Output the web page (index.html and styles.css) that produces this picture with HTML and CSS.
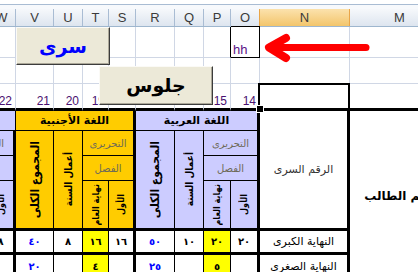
FILE: index.html
```html
<!DOCTYPE html>
<html lang="ar">
<head>
<meta charset="utf-8">
<link rel="stylesheet" href="styles.css">
</head>
<body>
<div class="screen">
  <div class="topstrip"></div>
  <div class="colheads">
    <div class="ch"></div>
    <div class="ch">W</div>
    <div class="ch">V</div>
    <div class="ch">U</div>
    <div class="ch">T</div>
    <div class="ch">S</div>
    <div class="ch">R</div>
    <div class="ch">Q</div>
    <div class="ch">P</div>
    <div class="ch">O</div>
    <div class="ch ch-sel">N</div>
    <div class="ch">M</div>
  </div>
  <div class="sheet">
    <!-- row 1 -->
    <div class="g"></div><div class="g"></div><div class="g"></div><div class="g"></div>
    <div class="g"></div><div class="g"></div><div class="g"></div><div class="g"></div>
    <div class="g g-pk"></div>
    <div class="g hh">hh</div>
    <div class="g"></div><div class="g"></div>
    <!-- row 2 -->
    <div class="g"></div><div class="g"></div><div class="g"></div><div class="g"></div>
    <div class="g"></div><div class="g"></div><div class="g"></div><div class="g"></div>
    <div class="g"></div><div class="g"></div><div class="g"></div><div class="g"></div>
    <!-- row 3 -->
    <div class="g g3 num"></div>
    <div class="g g3 num">22</div>
    <div class="g g3 num">21</div>
    <div class="g g3 num">20</div>
    <div class="g g3 num">19</div>
    <div class="g g3 num">18</div>
    <div class="g g3 num">17</div>
    <div class="g g3 num">16</div>
    <div class="g g3 num">15</div>
    <div class="g g3 num">14</div>
    <div class="g g3 sel"></div>
    <div class="g g3"></div>
    <!-- row 4 -->
    <div class="c lav span2 title"></div>
    <div class="c yel span4 title tr"><span dir="rtl">اللغة الأجنبية</span></div>
    <div class="c lav span4 title tr"><span dir="rtl">اللغة العربية</span></div>
    <div class="c rs4 plain tr bb3"><span dir="rtl">الرقم السرى</span></div>
    <div class="c rs6 name"><span dir="rtl">اسم الطالب</span></div>
    <!-- row 5 -->
    <div class="c lav span2 sub tr"><span dir="rtl">التحريرى</span></div>
    <div class="c yel rs3 bb3"><span class="vt big" dir="rtl">المجموع الكلى</span></div>
    <div class="c yel rs3 bb3"><span class="vt mid" dir="rtl">أعمال السنة</span></div>
    <div class="c yel span2 sub tr"><span dir="rtl">التحريرى</span></div>
    <div class="c lav rs3 bb3"><span class="vt big" dir="rtl">المجموع الكلى</span></div>
    <div class="c lav rs3 bb3"><span class="vt mid" dir="rtl">أعمال السنة</span></div>
    <div class="c lav span2 sub tr"><span dir="rtl">التحريرى</span></div>
    <!-- row 6 -->
    <div class="c lav span2 sub tr"><span dir="rtl">الفصل</span></div>
    <div class="c yel span2 sub tr"><span dir="rtl">الفصل</span></div>
    <div class="c lav span2 sub tr"><span dir="rtl">الفصل</span></div>
    <!-- row 7 -->
    <div class="c lav bb3"><span class="vt sm" dir="rtl">نهاية العام</span></div>
    <div class="c lav bb3 tr"><span class="vt sm" dir="rtl">الأول</span></div>
    <div class="c yel bb3"><span class="vt sm" dir="rtl">نهاية العام</span></div>
    <div class="c yel bb3 tr"><span class="vt sm" dir="rtl">الأول</span></div>
    <div class="c lav bb3"><span class="vt sm" dir="rtl">نهاية العام</span></div>
    <div class="c lav bb3 tr"><span class="vt sm" dir="rtl">الأول</span></div>
    <!-- row 8 (data) -->
    <div class="c d bb3"></div>
    <div class="c d bb3 tr">٨</div>
    <div class="c d bb3 blue">٤٠</div>
    <div class="c d bb3">٨</div>
    <div class="c d bb3 ylw">١٦</div>
    <div class="c d bb3 tr">١٦</div>
    <div class="c d bb3 blue">٥٠</div>
    <div class="c d bb3">١٠</div>
    <div class="c d bb3 ylw">٢٠</div>
    <div class="c d bb3 tr">٢٠</div>
    <div class="c d bb3 tr label"><span dir="rtl">النهاية الكبرى</span></div>
    <!-- row 9 (data) -->
    <div class="c d bb3"></div>
    <div class="c d bb3 tr"></div>
    <div class="c d bb3 blue">٢٠</div>
    <div class="c d bb3"></div>
    <div class="c d bb3 ylw">٤</div>
    <div class="c d bb3 tr"></div>
    <div class="c d bb3 blue">٢٥</div>
    <div class="c d bb3"></div>
    <div class="c d bb3 ylw">٥</div>
    <div class="c d bb3 tr"></div>
    <div class="c d bb3 tr label"><span dir="rtl">النهاية الصغرى</span></div>
  </div>

  <button class="btn btn-sirri" type="button">سرى</button>
  <button class="btn btn-julus" type="button">جلوس</button>

  <svg class="arrow" width="120" height="40" viewBox="0 0 120 40" aria-hidden="true">
    <path d="M28 10 L11 19.5 L28 30" fill="none" stroke="#ff0000" stroke-width="8" stroke-linecap="round" stroke-linejoin="round"/>
    <path d="M13 19.5 L108 19.5" fill="none" stroke="#ff0000" stroke-width="7" stroke-linecap="round"/>
  </svg>
</div>
</body>
</html>
```

FILE: styles.css
```css
* { box-sizing: border-box; }

html, body {
  margin: 0;
  padding: 0;
  background: #ffffff;
}

.screen {
  position: relative;
  width: 418px;
  height: 272px;
  overflow: hidden;
  background: #ffffff;
}

.topstrip {
  height: 9px;
  background: linear-gradient(#ffffff 0 4px, #a9bcd3 4px 5px, #f7f9fc 5px);
}

.colheads,
.sheet {
  display: grid;
  grid-template-columns: 30px 28px 38px 29px 26px 27px 39px 29px 27px 29px 90px 100px;
  margin-left: -42px;
  width: 492px;
}

.colheads {
  height: 18px;
  border-bottom: 1px solid #9eb6ce;
  background: linear-gradient(#f6f8fb, #dde5ef);
}

.ch {
  border-right: 1px solid #a9bcd3;
  font: 13px/17px "Liberation Sans", Arial, sans-serif;
  color: #3b3b3b;
  text-align: center;
}

.ch-sel {
  background: linear-gradient(#fbe2ad, #f3c56b);
  border-right-color: #e9a548;
  border-left: 1px solid #e9a548;
  margin-left: -1px;
}

.sheet {
  grid-template-rows: 31px 26px 27px 20px 25px 25px 50px 24px 25px;
}

/* spreadsheet grid cells (top area) */
.g {
  border-right: 1px solid #d0d7e5;
  border-bottom: 1px solid #d0d7e5;
}

.g-pk { border-right-color: #000; }

.hh {
  border-right-color: #000;
  border-bottom-color: #000;
  box-shadow: 0 -1px 0 0 #000;
  display: flex;
  align-items: flex-end;
  padding: 0 0 1px 2px;
  font: 13px/13px "Liberation Sans", Arial, sans-serif;
  color: #5b1186;
}

.g3 { border-bottom: 3px solid #000; }

.num {
  display: flex;
  justify-content: flex-end;
  align-items: flex-end;
  padding: 0 3px 1px 0;
  font: 12px/12px "Liberation Sans", Arial, sans-serif;
  color: #4a1070;
}

.sel { position: relative; }
.sel::after {
  content: "";
  position: absolute;
  left: -2px;
  top: -1px;
  right: -1px;
  bottom: -3px;
  border: 2px solid #000;
}
.sel::before {
  content: "";
  position: absolute;
  left: -4px;
  bottom: -5px;
  width: 6px;
  height: 6px;
  background: #000;
  border: 1px solid #fff;
  z-index: 1;
}

/* table cells */
.c {
  display: flex;
  align-items: center;
  justify-content: center;
  overflow: hidden;
  border-right: 1px solid #000;
  border-bottom: 1px solid #000;
  font-family: "DejaVu Sans", "Liberation Sans", sans-serif;
  color: #000;
  white-space: nowrap;
}

.tr { border-right-width: 3px; }
.bb3 { border-bottom-width: 3px; }

.span2 { grid-column: span 2; }
.span4 { grid-column: span 4; }
.rs3 { grid-row: span 3; }
.rs4 { grid-row: span 4; }
.rs6 { grid-row: span 6; border-right: none; border-bottom: none; }

.lav { background: #ccccff; }
.yel { background: #ffcc00; }

.title {
  font-size: 11px;
  font-weight: bold;
}

.sub {
  font-size: 10px;
  color: #6e6a58;
}

.plain {
  font-size: 11px;
  color: #333;
}

.name {
  font-size: 12px;
  font-weight: bold;
  justify-content: center;
}

.vt {
  writing-mode: vertical-rl;
  transform: rotate(180deg);
  font-family: "DejaVu Sans Condensed", "DejaVu Sans", sans-serif;
  font-weight: bold;
}
.vt.big { font-size: 12px; }
.vt.mid { font-size: 10px; }
.vt.sm { font-size: 9px; letter-spacing: -0.3px; }

.d {
  background: #fff;
  font-size: 10px;
  font-weight: bold;
}
.d.blue { color: #0000ff; }
.d.ylw { background: #ffff00; }
.d.label {
  font-size: 11px;
  font-weight: normal;
}

/* buttons */
.btn {
  position: absolute;
  margin: 0;
  padding: 0;
  background: #ece9d8;
  border: 1px solid;
  border-color: #fbfaf6 #3c3c3c #3c3c3c #fbfaf6;
  box-shadow: inset -1px -1px 0 #aca899;
  font-family: "DejaVu Sans", sans-serif;
  font-weight: bold;
  font-size: 19px;
  line-height: 1;
}
.btn-sirri {
  left: 16px;
  top: 27px;
  width: 94px;
  height: 38px;
  color: #0000ff;
}
.btn-julus {
  left: 99px;
  top: 66px;
  width: 114px;
  height: 39px;
  color: #000;
}

.arrow {
  position: absolute;
  left: 258px;
  top: 28px;
}
```
